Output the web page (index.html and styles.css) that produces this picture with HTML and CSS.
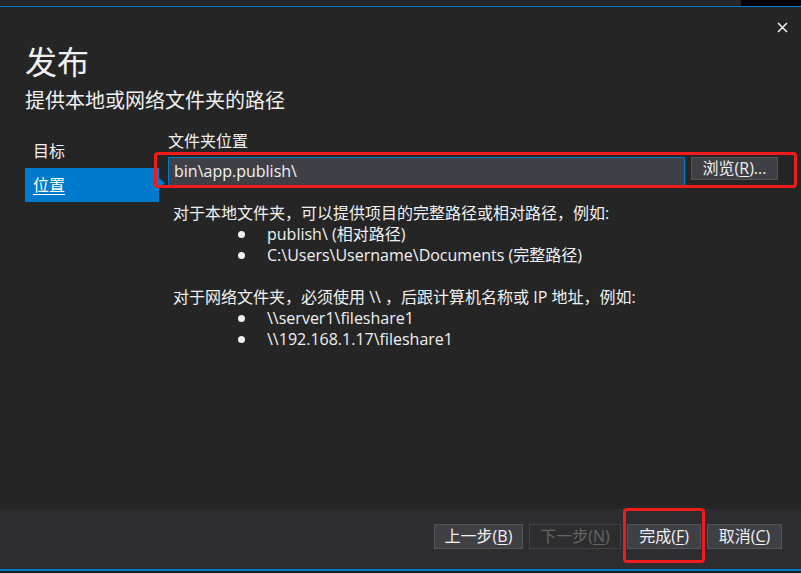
FILE: index.html
```html
<!DOCTYPE html>
<html lang="zh-CN">
<head>
<meta charset="utf-8">
<title>发布</title>
<link rel="stylesheet" href="styles.css">
</head>
<body>
<div class="window">
  <div class="top-strip"><div class="top-black"></div></div>
  <div class="top-line"></div>
  <main class="main">
    <button class="close" aria-label="关闭">
      <svg width="11" height="11" viewBox="0 0 11 11"><path d="M1 1 L10 10 M10 1 L1 10" stroke="#f1f1f1" stroke-width="1.5" fill="none"/></svg>
    </button>
    <h1 class="title">发布</h1>
    <div class="subtitle">提供本地或网络文件夹的路径</div>
    <div class="body-row">
      <nav class="nav">
        <div class="nav-item">目标</div>
        <div class="nav-item selected"><span>位置</span></div>
      </nav>
      <section class="content">
        <div class="label">文件夹位置</div>
        <div class="field-row">
          <div class="input">bin\app.publish\</div>
          <button class="btn browse">浏览(<u>R</u>)...</button>
          <div class="highlight hl-field"></div>
        </div>
        <div class="help">
          <p>对于本地文件夹，可以提供项目的完整路径或相对路径，例如:</p>
          <ul>
            <li>publish\ (相对路径)</li>
            <li>C:\Users\Username\Documents (完整路径)</li>
          </ul>
          <p class="gap">对于网络文件夹，必须使用 \\ ，后跟计算机名称或 IP 地址，例如:</p>
          <ul>
            <li>\\server1\fileshare1</li>
            <li>\\192.168.1.17\fileshare1</li>
          </ul>
        </div>
      </section>
    </div>
  </main>
  <footer class="footer">
    <button class="btn btn-back">上一步(<u>B</u>)</button>
    <button class="btn btn-next disabled">下一步(<u>N</u>)</button>
    <span class="hl-wrap"><button class="btn btn-finish">完成(<u>F</u>)</button><span class="highlight hl-finish"></span></span>
    <button class="btn btn-cancel">取消(<u>C</u>)</button>
  </footer>
  <div class="bottom-line"></div>
  <div class="bottom-strip"></div>
</div>
</body>
</html>
```

FILE: styles.css
```css
* { box-sizing: border-box; }
html, body { margin: 0; padding: 0; }
body {
  background: #252526;
  color: #f1f1f1;
  font-family: "Open Sans", "Noto Sans CJK SC", sans-serif;
  font-size: 16px;
}
.window {
  width: 801px;
  height: 573px;
  display: flex;
  flex-direction: column;
  overflow: hidden;
}
.top-strip { height: 6px; display: flex; background: #252526; }
.top-black { margin-left: auto; width: 60px; background: #000; }
.top-line { height: 1px; background: #007acc; }
.main {
  position: relative;
  flex: 1;
  padding-left: 25px;
  background: #252526;
}
.close {
  position: absolute;
  top: 14px;
  right: 12px;
  width: 13px;
  height: 13px;
  padding: 1px;
  border: 0;
  background: transparent;
  display: flex;
}
.title {
  margin: 33px 0 0;
  font-size: 32px;
  line-height: 40px;
  font-weight: normal;
  color: #f1f1f1;
  font-family: "Noto Sans CJK SC", sans-serif;
}
.subtitle {
  margin-top: 7px;
  font-size: 20px;
  line-height: 26px;
  color: #f1f1f1;
  font-family: "Noto Sans CJK SC", sans-serif;
}
.body-row {
  margin-top: 18px;
  display: flex;
}
.nav {
  width: 134px;
  margin-top: 3px;
  flex: none;
}
.nav-item {
  position: relative;
  height: 34px;
  line-height: 34px;
  padding-left: 8px;
  color: #f1f1f1;
}
.nav-item.selected { background: #007acc; color: #fff; }
.nav-item.selected span {
  text-decoration: underline;
  text-underline-offset: 3px;
}
.nav-item.selected::after {
  content: "";
  position: absolute;
  right: -6px;
  top: 10px;
  border-left: 6px solid #007acc;
  border-top: 5px solid transparent;
  border-bottom: 5px solid transparent;
}
.content {
  flex: 1;
  margin-left: 9px;
  padding-right: 23px;
}
.label {
  line-height: 21px;
  color: #f1f1f1;
}
.field-row {
  position: relative;
  margin-top: 5px;
  display: flex;
  align-items: flex-start;
  gap: 6px;
}
.input {
  flex: 1;
  height: 29px;
  line-height: 27px;
  padding-left: 5px;
  background: #3f3f46;
  border: 1px solid #007acc;
  color: #f1f1f1;
}
.btn {
  height: 25px;
  padding: 0;
  background: #3f3f46;
  border: 1px solid #555558;
  color: #f1f1f1;
  font: inherit;
  line-height: 23px;
  text-align: center;
}
.btn u { text-underline-offset: 2px; }
.browse { height: 23px; width: 87px; line-height: 21px; }
.btn-back { width: 89px; }
.btn-next { width: 92px; }
.btn-finish { width: 74px; }
.btn-cancel { width: 75px; }
.btn.disabled {
  background: #2d2d30;
  border-color: #434346;
  color: #656565;
}
.highlight {
  position: absolute;
  border: 3px solid #ee1c1c;
  border-radius: 4px;
  pointer-events: none;
}
.hl-field { left: -14px; right: -19px; top: -5px; bottom: -2px; }
.help {
  margin-top: 17px;
  padding-left: 5px;
  line-height: 21px;
  color: #f1f1f1;
}
.help p { margin: 0; }
.help p.gap { margin-top: 21px; }
.help ul { margin: 0; padding: 0; list-style: none; }
.help li { position: relative; padding-left: 94px; }
.help li::before {
  content: "";
  position: absolute;
  left: 65px;
  top: 7px;
  width: 7px;
  height: 7px;
  border-radius: 50%;
  background: #f1f1f1;
}
.footer {
  height: 60px;
  flex: none;
  background: #2d2d30;
  display: flex;
  justify-content: flex-end;
  align-items: flex-start;
  gap: 6px;
  padding: 15px 19px 0 0;
}
.hl-wrap { position: relative; display: flex; }
.hl-finish { left: -4px; right: -4px; top: -16px; bottom: -14px; }
.bottom-line { height: 2px; background: #007acc; flex: none; }
.bottom-strip { height: 2px; background: #1e1e1e; flex: none; }
```
